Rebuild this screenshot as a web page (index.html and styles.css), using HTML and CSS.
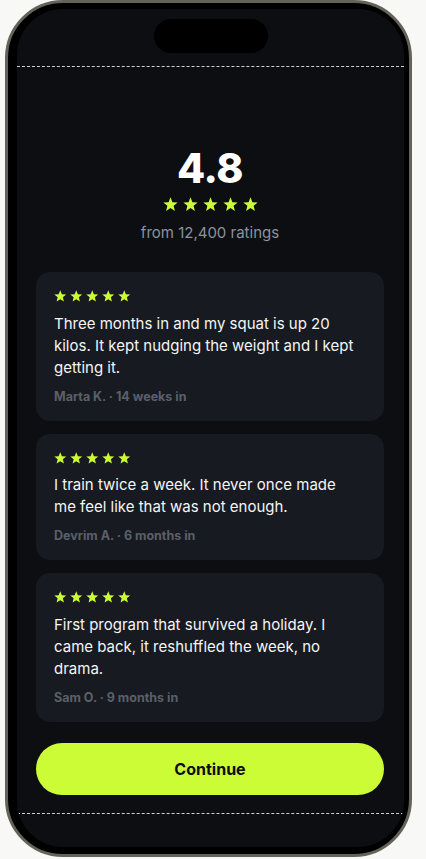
FILE: index.html
```html
<!DOCTYPE html>
<html lang="en">
  <head>
    <meta charset="utf-8" />
    <meta name="viewport" content="width=device-width, initial-scale=1" />
    <title>Reviews</title>
    <link rel="stylesheet" href="styles.css">
  </head>
  <body>
    <div class="phone">
      <div class="screen">
        <div class="topbar">
          <div class="island"></div>
        </div>
        <div class="main">
          <div class="hero">
            <div class="score">4.8</div>
            <div class="stars big">
              <svg viewBox="0 0 24 24"><path d="M12 .5L15.06 8.29 23.41 8.79 16.95 14.11 19.05 22.21 12 17.7 4.95 22.21 7.05 14.11 .59 8.79 8.94 8.29Z"/></svg>
              <svg viewBox="0 0 24 24"><path d="M12 .5L15.06 8.29 23.41 8.79 16.95 14.11 19.05 22.21 12 17.7 4.95 22.21 7.05 14.11 .59 8.79 8.94 8.29Z"/></svg>
              <svg viewBox="0 0 24 24"><path d="M12 .5L15.06 8.29 23.41 8.79 16.95 14.11 19.05 22.21 12 17.7 4.95 22.21 7.05 14.11 .59 8.79 8.94 8.29Z"/></svg>
              <svg viewBox="0 0 24 24"><path d="M12 .5L15.06 8.29 23.41 8.79 16.95 14.11 19.05 22.21 12 17.7 4.95 22.21 7.05 14.11 .59 8.79 8.94 8.29Z"/></svg>
              <svg viewBox="0 0 24 24"><path d="M12 .5L15.06 8.29 23.41 8.79 16.95 14.11 19.05 22.21 12 17.7 4.95 22.21 7.05 14.11 .59 8.79 8.94 8.29Z"/></svg>
            </div>
            <p class="count">from 12,400 ratings</p>
          </div>

          <div class="reviews">
            <div class="card">
              <div class="stars">
                <svg viewBox="0 0 24 24"><path d="M12 .5L15.06 8.29 23.41 8.79 16.95 14.11 19.05 22.21 12 17.7 4.95 22.21 7.05 14.11 .59 8.79 8.94 8.29Z"/></svg>
                <svg viewBox="0 0 24 24"><path d="M12 .5L15.06 8.29 23.41 8.79 16.95 14.11 19.05 22.21 12 17.7 4.95 22.21 7.05 14.11 .59 8.79 8.94 8.29Z"/></svg>
                <svg viewBox="0 0 24 24"><path d="M12 .5L15.06 8.29 23.41 8.79 16.95 14.11 19.05 22.21 12 17.7 4.95 22.21 7.05 14.11 .59 8.79 8.94 8.29Z"/></svg>
                <svg viewBox="0 0 24 24"><path d="M12 .5L15.06 8.29 23.41 8.79 16.95 14.11 19.05 22.21 12 17.7 4.95 22.21 7.05 14.11 .59 8.79 8.94 8.29Z"/></svg>
                <svg viewBox="0 0 24 24"><path d="M12 .5L15.06 8.29 23.41 8.79 16.95 14.11 19.05 22.21 12 17.7 4.95 22.21 7.05 14.11 .59 8.79 8.94 8.29Z"/></svg>
              </div>
              <p class="quote">Three months in and my squat is up 20 kilos. It kept nudging the weight and I kept getting it.</p>
              <p class="who">Marta K. · 14 weeks in</p>
            </div>
            <div class="card">
              <div class="stars">
                <svg viewBox="0 0 24 24"><path d="M12 .5L15.06 8.29 23.41 8.79 16.95 14.11 19.05 22.21 12 17.7 4.95 22.21 7.05 14.11 .59 8.79 8.94 8.29Z"/></svg>
                <svg viewBox="0 0 24 24"><path d="M12 .5L15.06 8.29 23.41 8.79 16.95 14.11 19.05 22.21 12 17.7 4.95 22.21 7.05 14.11 .59 8.79 8.94 8.29Z"/></svg>
                <svg viewBox="0 0 24 24"><path d="M12 .5L15.06 8.29 23.41 8.79 16.95 14.11 19.05 22.21 12 17.7 4.95 22.21 7.05 14.11 .59 8.79 8.94 8.29Z"/></svg>
                <svg viewBox="0 0 24 24"><path d="M12 .5L15.06 8.29 23.41 8.79 16.95 14.11 19.05 22.21 12 17.7 4.95 22.21 7.05 14.11 .59 8.79 8.94 8.29Z"/></svg>
                <svg viewBox="0 0 24 24"><path d="M12 .5L15.06 8.29 23.41 8.79 16.95 14.11 19.05 22.21 12 17.7 4.95 22.21 7.05 14.11 .59 8.79 8.94 8.29Z"/></svg>
              </div>
              <p class="quote">I train twice a week. It never once made me feel like that was not enough.</p>
              <p class="who">Devrim A. · 6 months in</p>
            </div>
            <div class="card">
              <div class="stars">
                <svg viewBox="0 0 24 24"><path d="M12 .5L15.06 8.29 23.41 8.79 16.95 14.11 19.05 22.21 12 17.7 4.95 22.21 7.05 14.11 .59 8.79 8.94 8.29Z"/></svg>
                <svg viewBox="0 0 24 24"><path d="M12 .5L15.06 8.29 23.41 8.79 16.95 14.11 19.05 22.21 12 17.7 4.95 22.21 7.05 14.11 .59 8.79 8.94 8.29Z"/></svg>
                <svg viewBox="0 0 24 24"><path d="M12 .5L15.06 8.29 23.41 8.79 16.95 14.11 19.05 22.21 12 17.7 4.95 22.21 7.05 14.11 .59 8.79 8.94 8.29Z"/></svg>
                <svg viewBox="0 0 24 24"><path d="M12 .5L15.06 8.29 23.41 8.79 16.95 14.11 19.05 22.21 12 17.7 4.95 22.21 7.05 14.11 .59 8.79 8.94 8.29Z"/></svg>
                <svg viewBox="0 0 24 24"><path d="M12 .5L15.06 8.29 23.41 8.79 16.95 14.11 19.05 22.21 12 17.7 4.95 22.21 7.05 14.11 .59 8.79 8.94 8.29Z"/></svg>
              </div>
              <p class="quote">First program that survived a holiday. I came back, it reshuffled the week, no drama.</p>
              <p class="who">Sam O. · 9 months in</p>
            </div>
          </div>

          <button class="continue">Continue</button>
        </div>
        <div class="bottombar"></div>
      </div>
    </div>
  </body>
</html>
```

FILE: styles.css
```css
:root {
  --bg: #0c0e12;
  --card: #171a20;
  --lime: #ccfc35;
  --muted: #8d939c;
  --faint: #5a606a;
}

* {
  box-sizing: border-box;
}

body {
  margin: 0;
  background: #f8f8f6;
  font-family: Inter, "Noto Sans", sans-serif;
}

.phone {
  width: 407px;
  height: 857px;
  margin-left: 5px;
  padding: 6px 5px 7px 9px;
  border: 3px solid #64635a;
  border-radius: 58px;
  background: #000;
}

.screen {
  height: 100%;
  border-radius: 46px;
  background: var(--bg);
  display: flex;
  flex-direction: column;
  overflow: hidden;
}

.topbar {
  height: 58px;
  flex-shrink: 0;
  padding-top: 10px;
  display: flex;
  justify-content: center;
  border-bottom: 1px dashed #d0d0d0;
}

.island {
  width: 114px;
  height: 34px;
  border-radius: 17px;
  background: #000;
}

.main {
  flex: 1;
  display: flex;
  flex-direction: column;
  padding: 0 20px 18px 19px;
}

.hero {
  text-align: center;
  padding-top: 79px;
}

.score {
  color: #fff;
  font-size: 41px;
  font-weight: 800;
  line-height: 44px;
  letter-spacing: -0.5px;
}

.stars {
  display: flex;
  gap: 3.5px;
}

.stars svg {
  width: 12.5px;
  height: 12.5px;
  fill: var(--lime);
}

.stars.big {
  justify-content: center;
  gap: 5px;
  margin-top: 7px;
}

.stars.big svg {
  width: 15px;
  height: 15px;
}

.count {
  margin: 11px 0 0;
  color: var(--muted);
  font-size: 15px;
  line-height: 20px;
}

.reviews {
  margin-top: 29px;
  display: flex;
  flex-direction: column;
  gap: 13px;
}

.card {
  background: var(--card);
  border-radius: 14px;
  padding: 18px 26px 16px 18px;
}

.quote {
  margin: 10px 0 0;
  color: #f4f5f7;
  font-size: 15px;
  line-height: 22px;
}

.who {
  margin: 10px 0 0;
  color: var(--faint);
  font-size: 12.5px;
  font-weight: 700;
  line-height: 16px;
}

.continue {
  margin-top: auto;
  height: 52px;
  border: none;
  border-radius: 26px;
  background: var(--lime);
  color: #0c0e12;
  font-family: inherit;
  font-size: 16px;
  font-weight: 700;
}

.bottombar {
  height: 34px;
  flex-shrink: 0;
  border-top: 1px dashed #d0d0d0;
}
```
